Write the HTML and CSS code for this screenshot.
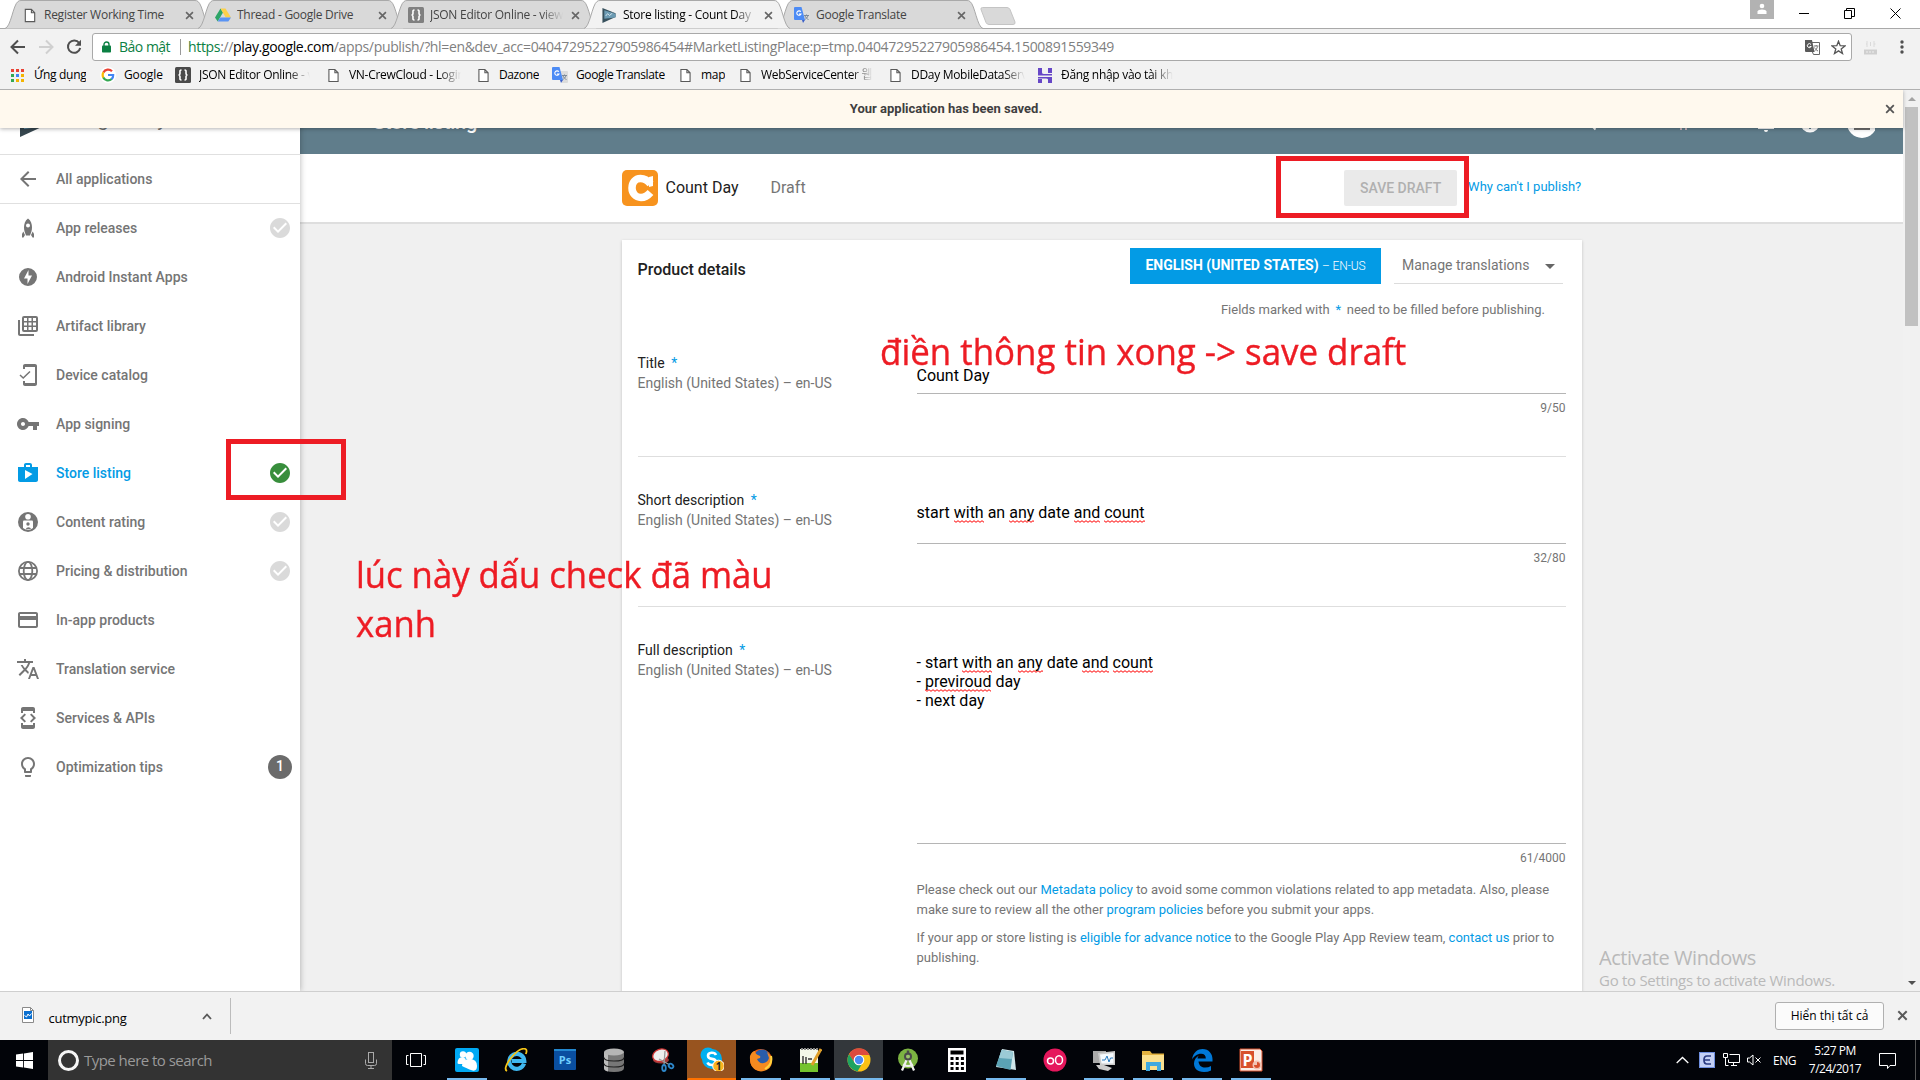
FILE: index.html
```html
<!DOCTYPE html>
<html lang="en">
<head>
<meta charset="utf-8">
<title>Store listing - Count Day</title>
<link rel="stylesheet" href="styles.css">
</head>
<body>
<svg class="defs" width="0" height="0">
  <symbol id="page" viewBox="0 0 12 16"><path d="M1 1.500h6.500L11 5v9.500H1z M7.500 1.500V5H11" fill="#fff" stroke="#5a5a5a" stroke-width="1.200"/></symbol>
  <symbol id="x" viewBox="0 0 10 10"><path d="M1.200 1.200l7.600 7.600M8.800 1.200L1.200 8.800" stroke="currentColor" stroke-width="1.800" fill="none"/></symbol>
  <symbol id="json" viewBox="0 0 16 16"><rect width="16" height="16" rx="1.500" fill="currentColor"/><path d="M6.500 3C4.500 3 5 4.500 5 6S4.500 8 3.500 8C4.500 8 5 8.500 5 10s-.5 3 1.500 3M9.500 3c2 0 1.500 1.500 1.500 3s.5 2 1.500 2c-1 0-1.500.5-1.500 2s.5 3-1.500 3" fill="none" stroke="#fff" stroke-width="1.600"/></symbol>
  <symbol id="gt" viewBox="0 0 16 16"><path d="M7 4h8a1 1 0 011 1v10a1 1 0 01-1 1H10z" fill="#dcdcdc"/><path d="M10 8.500h5M12.500 7.500v1M14 8.500c-.5 2-2 3.500-3.500 4M11 9c.7 1.500 2 3 3.500 3.500" stroke="#7d8a99" fill="none"/><path d="M1 0h6.500L11 13H1a1 1 0 01-1-1V1a1 1 0 011-1z" fill="#4c8bf5"/><path d="M8 13h3l-2 3z" fill="#3a5fc8"/><path d="M6.800 4.800A2.200 2.200 0 107 7H5" stroke="#fff" stroke-width="1.100" fill="none"/></symbol>
  <symbol id="play" viewBox="0 0 14 16"><path d="M0 0l14 5.500v4L0 16z" fill="#37505c"/><path d="M2 2.500l12 3.500v4L2 11.500z" fill="#6c9bb3"/><path d="M3.500 8.500l2-2.500 2 2 3-2.500" stroke="#d5e5ee" fill="none"/></symbol>
  <symbol id="check" viewBox="0 0 24 24"><path d="M12 2C6.480 2 2 6.480 2 12s4.480 10 10 10 10-4.480 10-10S17.520 2 12 2zm-2 15l-5-5 1.410-1.410L10 14.170l7.590-7.590L19 8l-9 9z" fill="currentColor"/></symbol>
</svg>

<header class="chrome">
  <div class="tabs">
    <div class="tab"><svg class="shape" viewBox="0 0 206 29"><path d="M0 28.500C6 27 8 5 13 1.500Q14 .5 16 .5H190Q192 .5 193 1.500C198 5 200 27 206 28.500"/></svg><svg class="fav pg"><use href="#page"/></svg><span class="ttl">Register Working Time</span><svg class="cl"><use href="#x"/></svg></div>
    <div class="tab"><svg class="shape" viewBox="0 0 206 29"><path d="M0 28.500C6 27 8 5 13 1.500Q14 .5 16 .5H190Q192 .5 193 1.500C198 5 200 27 206 28.500"/></svg><svg class="fav" viewBox="0 0 16 16"><path d="M5.500 1.500L0 10.500l2.700 4L8 5.500z" fill="#2da567"/><path d="M5.500 1.500h5l5.500 9h-5.300z" fill="#fcd04b"/><path d="M5.300 10.500H16l-2.700 4H2.700z" fill="#5a94f4"/></svg><span class="ttl">Thread - Google Drive</span><svg class="cl"><use href="#x"/></svg></div>
    <div class="tab"><svg class="shape" viewBox="0 0 206 29"><path d="M0 28.500C6 27 8 5 13 1.500Q14 .5 16 .5H190Q192 .5 193 1.500C198 5 200 27 206 28.500"/></svg><svg class="fav dim"><use href="#json"/></svg><span class="ttl fade">JSON Editor Online - view</span><svg class="cl"><use href="#x"/></svg></div>
    <div class="tab active"><svg class="shape" viewBox="0 0 206 29"><path d="M0 28.500C6 27 8 5 13 1.500Q14 .5 16 .5H190Q192 .5 193 1.500C198 5 200 27 206 28.500"/></svg><svg class="fav pl"><use href="#play"/></svg><span class="ttl fade">Store listing - Count Day</span><svg class="cl"><use href="#x"/></svg></div>
    <div class="tab"><svg class="shape" viewBox="0 0 206 29"><path d="M0 28.500C6 27 8 5 13 1.500Q14 .5 16 .5H190Q192 .5 193 1.500C198 5 200 27 206 28.500"/></svg><svg class="fav"><use href="#gt"/></svg><span class="ttl">Google Translate</span><svg class="cl"><use href="#x"/></svg></div>
    <svg class="newtab" viewBox="0 0 36 18"><path d="M2.500.5H27Q29 .5 30 2.500L35 15Q35.500 17.500 33 17.500H9Q7 17.500 6 15.500L1 2.500Q.5.500 2.500.5z" fill="#d9d9d9" stroke="#c4c4c4"/></svg>
    <div class="winctl">
      <span class="user"><svg width="10" height="12" viewBox="0 0 10 12"><circle cx="5" cy="3" r="2.300" fill="#fff"/><path d="M0.500 11V8.500Q1 6.500 5 6.500t4.500 2V11z" fill="#fff"/></svg></span>
      <svg class="wc min" width="10" height="11"><path d="M0 5.500h10" stroke="#000"/></svg>
      <svg class="wc res" width="11" height="11"><path d="M.5 2.500h7v8h-7zM2.500 2V.5h8v8H8" stroke="#000" fill="none"/></svg>
      <svg class="wc" width="11" height="11"><path d="M.5.500l10 10M10.500.5l-10 10" stroke="#000" fill="none"/></svg>
    </div>
  </div>
  <div class="bar">
    <svg class="nav" viewBox="0 0 16 16"><path d="M15 8H2M8 1.500L1.500 8 8 14.500" stroke="#4f4f4f"/></svg>
    <svg class="nav" viewBox="0 0 16 16"><path d="M1 8h13M8 1.500L14.500 8 8 14.500" stroke="#d0d0d0"/></svg>
    <svg class="nav" viewBox="0 0 16 16"><path d="M13.200 4A6.200 6.200 0 1014.200 9" stroke="#4f4f4f"/><path d="M15 .8v6H9z" fill="#4f4f4f" stroke="none"/></svg>
    <div class="url">
      <svg class="lock" viewBox="0 0 9 12"><path d="M2 6V3.500a2.500 2.500 0 015 0V6" fill="none" stroke="#0b8043" stroke-width="1.400"/><rect y="4.500" width="9" height="7" rx=".8" fill="#0b8043"/></svg>
      <span class="secure">Bảo mật</span>
      <span class="addr"><i class="g">https</i>://<b>play.google.com</b>/apps/publish/?hl=en&amp;dev_acc=04047295227905986454#MarketListingPlace:p=tmp.04047295227905986454.1500891559349</span>
      <svg class="tr" width="15" height="15" viewBox="0 0 15 15"><path d="M7 2.500h7.500v12H8.500L7 11" fill="#fff" stroke="#666"/><path d="M9 6h4.500M11.200 5v1M12.500 6.500c-.5 2-1.500 3.500-3 4.500M9.500 7.500c.8 1.500 1.800 2.600 3.500 3.500" stroke="#777" fill="none"/><path d="M0 0h7l2.500 12H1a1 1 0 01-1-1z" fill="#5a5a5a"/><path d="M6 4.500A2 2 0 106.200 6.500H4.500" stroke="#fff" fill="none"/></svg>
      <svg width="15" height="15" viewBox="0 0 15 15"><path d="M7.500 1.200l1.700 4.500 4.800.2-3.800 3 1.300 4.600-4-2.600-4 2.600 1.300-4.600-3.800-3 4.800-.2z" fill="none" stroke="#555" stroke-width="1.300"/></svg>
    </div>
    <svg class="ext" width="13" height="15" viewBox="0 0 13 15"><path d="M3 1v6M6.500 2v4M10 1v6M2 4h1M10 4h1.500" stroke="#dadada" fill="none"/><rect y="9.500" width="13" height="5" fill="#cfcfcf"/><path d="M2 12h9" stroke="#eee" stroke-dasharray="2 1"/></svg>
    <svg width="4" height="14" viewBox="0 0 4 14"><g fill="#505050"><circle cx="2" cy="2" r="1.700"/><circle cx="2" cy="7" r="1.700"/><circle cx="2" cy="12" r="1.700"/></g></svg>
  </div>
  <nav class="marks">
    <span class="bm w1"><svg width="13" height="13" viewBox="0 0 13 13"><g fill="#ea4335"><path d="M0 0h3v3H0zM5 0h3v3H5zM10 0h3v3h-3z"/></g><path d="M0 5h3v3H0zM0 10h3v3H0z" fill="#34a853"/><path d="M5 5h3v3H5z" fill="#4285f4"/><path d="M10 5h3v3h-3zM5 10h3v3H5zM10 10h3v3h-3z" fill="#f4b400"/></svg><em>Ứng dụng</em></span>
    <span class="bm w2"><svg width="16" height="16" viewBox="0 0 16 16"><circle cx="8" cy="8" r="8" fill="#fff"/><g fill="none" stroke-width="2.200"><path d="M12 4.300A5.300 5.300 0 003.400 5.500" stroke="#ea4335"/><path d="M3.400 5.300a5.400 5.400 0 000 5.400" stroke="#fbbc05"/><path d="M3.300 10.500A5.300 5.300 0 0011.700 12" stroke="#34a853"/><path d="M11.500 12.200A5.300 5.300 0 0013.200 8H8" stroke="#4285f4"/></g></svg><em>Google</em></span>
    <span class="bm w3"><svg class="dk" width="16" height="16"><use href="#json"/></svg><em class="fade">JSON Editor Online - view</em></span>
    <span class="bm w4"><svg width="11" height="15"><use href="#page"/></svg><em class="fade">VN-CrewCloud - Login</em></span>
    <span class="bm w5"><svg width="11" height="15"><use href="#page"/></svg><em>Dazone</em></span>
    <span class="bm w6"><svg width="16" height="16"><use href="#gt"/></svg><em>Google Translate</em></span>
    <span class="bm w7"><svg width="11" height="15"><use href="#page"/></svg><em>map</em></span>
    <span class="bm w8"><svg width="11" height="15"><use href="#page"/></svg><em class="fade">WebServiceCenter 웹</em></span>
    <span class="bm w9"><svg width="11" height="15"><use href="#page"/></svg><em class="fade">DDay MobileDataServ</em></span>
    <span class="bm w10"><svg width="14" height="15" viewBox="0 0 14 15"><path d="M0 0h4v4.500Q4 6 6 6h8v1.500H0zM10 0h4v5h-4zM0 9h14v6h-4v-3.500Q10 10.500 8 10.500H0zM0 11h4v4H0z" fill="#6747c7"/></svg><em class="fade">Đăng nhập vào tài kho</em></span>
  </nav>
</header>

<div class="view">
  <div class="banner"><span>Your application has been saved.</span><svg><use href="#x"/></svg></div>
  <aside class="side">
    <div class="brand"><svg width="26" height="40" viewBox="0 0 26 40"><path d="M0 0l26 20v7L0 39z" fill="#37474f"/><path d="M4 4l22 17v7L4 31z" fill="#5f8fa8"/></svg><span>Google Play Console</span></div>
    <div class="item back"><svg viewBox="0 0 24 24"><path d="M20 11H7.830l5.590-5.590L12 4l-8 8 8 8 1.410-1.410L7.830 13H20z"/></svg>All applications</div>
    <div class="item"><svg viewBox="0 0 24 24"><path fill-rule="evenodd" d="M12 2.500C9 4.500 8 8 8 11.500c0 3 1 5.500 2 8h4c1-2.500 2-5 2-8C16 8 15 4.500 12 2.500zm0 5a2 2 0 110 4 2 2 0 010-4zM7.300 15.500L6 18v3.500h1.500L9 19zM16.700 15.500L18 18v3.500h-1.500L15 19z"/></svg>App releases<svg class="st"><use href="#check"/></svg></div>
    <div class="item"><svg viewBox="0 0 24 24"><path fill-rule="evenodd" d="M12 3a9 9 0 100 18 9 9 0 000-18zm-.5 16v-5.500H8L12.500 5v5.500H16z"/></svg>Android Instant Apps</div>
    <div class="item"><svg viewBox="0 0 24 24"><path fill-rule="evenodd" d="M4 6H2v14c0 1.100.9 2 2 2h14v-2H4zM8 2h12a2 2 0 012 2v12a2 2 0 01-2 2H8a2 2 0 01-2-2V4a2 2 0 012-2zm0 2v3h3V4zm4.500 0v3h3V4zM17 4v3h3V4zM8 8.500v3h3v-3zm4.500 0v3h3v-3zm4.500 0v3h3v-3zM8 13v3h3v-3zm4.500 0v3h3v-3zm4.500 0v3h3v-3z"/></svg>Artifact library</div>
    <div class="item"><svg viewBox="0 0 24 24"><path d="M19 1H9c-1.100 0-2 .9-2 2v3h2V4h10v16H9v-2H7v3c0 1.100.9 2 2 2h10c1.100 0 2-.9 2-2V3c0-1.100-.9-2-2-2z"/><path d="M4 12l3.200 3L14 8.500" fill="none" stroke="#757575" stroke-width="1.500"/></svg>Device catalog</div>
    <div class="item"><svg viewBox="0 0 24 24"><path fill-rule="evenodd" d="M12.650 10C11.830 7.670 9.610 6 7 6c-3.310 0-6 2.690-6 6s2.690 6 6 6c2.610 0 4.830-1.670 5.650-4H17v4h4v-4h2v-4H12.650zM7 14c-1.100 0-2-.9-2-2s.9-2 2-2 2 .9 2 2-.9 2-2 2z"/></svg>App signing</div>
    <div class="item on"><svg viewBox="0 0 24 24"><path fill-rule="evenodd" d="M16 6V4c0-1.110-.89-2-2-2h-4c-1.110 0-2 .89-2 2v2H2v13c0 1.110.89 2 2 2h16c1.110 0 2-.89 2-2V6h-6zm-6-2h4v2h-4V4zM9 18V9l7.500 4L9 18z"/></svg>Store listing<svg class="st"><use href="#check"/></svg></div>
    <div class="item"><svg viewBox="0 0 24 24"><circle cx="12" cy="12" r="10"/><circle cx="12" cy="6.800" r="2.800" fill="#fff"/><path d="M8 10.500h8a1 1 0 011 1V18a8 8 0 01-10 0v-6.500a1 1 0 011-1z" fill="#fff"/><circle cx="12" cy="14" r="1.700"/><path d="M9.500 19.500q1-2.300 3-2.300T15 19"/></svg>Content rating<svg class="st"><use href="#check"/></svg></div>
    <div class="item"><svg viewBox="0 0 24 24"><g fill="none" stroke="#757575" stroke-width="1.800"><circle cx="12" cy="12" r="9.100"/><ellipse cx="12" cy="12" rx="4.300" ry="9.100"/><path d="M3.500 9h17M3.500 15h17"/></g></svg>Pricing &amp; distribution<svg class="st"><use href="#check"/></svg></div>
    <div class="item"><svg viewBox="0 0 24 24"><path fill-rule="evenodd" d="M20 4H4c-1.110 0-1.990.89-1.990 2L2 18c0 1.110.89 2 2 2h16c1.110 0 2-.89 2-2V6c0-1.110-.89-2-2-2zm0 14H4v-6h16v6zm0-10H4V6h16v2z"/></svg>In-app products</div>
    <div class="item"><svg viewBox="0 0 24 24"><path d="M12.870 15.070l-2.540-2.510.03-.03c1.740-1.940 2.980-4.170 3.710-6.530H17V4h-7V2H8v2H1v1.990h11.170C11.500 7.920 10.440 9.750 9 11.350 8.070 10.320 7.300 9.190 6.690 8h-2c.73 1.630 1.730 3.170 2.980 4.560l-5.090 5.020L4 19l5-5 3.110 3.110.76-2.040zM18.500 10h-2L12 22h2l1.120-3h4.750L21 22h2l-4.500-12zm-2.620 7l1.620-4.330L19.120 17h-3.240z"/></svg>Translation service</div>
    <div class="item"><svg viewBox="0 0 24 24"><path d="M7 5h10v2h2V3c0-1.100-.9-1.990-2-1.990L7 1c-1.100 0-2 .9-2 2v4h2V5zm8.410 11.590L20 12l-4.590-4.590L14 8.830 17.170 12 14 15.170l1.410 1.420zM10 15.170L6.830 12 10 8.830 8.590 7.410 4 12l4.590 4.590L10 15.170zM17 19H7v-2H5v4c0 1.100.9 2 2 2h10c1.100 0 2-.9 2-2v-4h-2v2z"/></svg>Services &amp; APIs</div>
    <div class="item"><svg viewBox="0 0 24 24"><path fill-rule="evenodd" d="M9 21c0 .55.45 1 1 1h4c.55 0 1-.45 1-1v-1H9v1zm3-19C8.140 2 5 5.140 5 9c0 2.380 1.190 4.470 3 5.740V17c0 .55.45 1 1 1h6c.55 0 1-.45 1-1v-2.260c1.810-1.270 3-3.360 3-5.740 0-3.860-3.140-7-7-7zm2.850 11.100l-.85.6V16h-4v-2.300l-.85-.6C7.800 12.160 7 10.630 7 9c0-2.760 2.240-5 5-5s5 2.240 5 5c0 1.630-.8 3.160-2.150 4.100z"/></svg>Optimization tips<span class="badge">1</span></div>
  </aside>
  <main class="main">
    <div class="ribbon"><span>Store listing</span>
      <svg class="rb" width="290" height="64" viewBox="0 0 290 64"><path d="M8 37l2.500 2.500" stroke="#fff" stroke-width="1.800"/><path d="M96 36v4M101 36v4" stroke="#e8c8d0" stroke-width="1.500"/><path d="M173 37h16v2h-16z" fill="#fff"/><path d="M179 40h4a2 2 0 01-4 0z" fill="#fff"/><circle cx="225" cy="33" r="9.500" fill="#fff"/><path d="M224 37h2v2h-2z" fill="#607d8b"/><circle cx="277" cy="33" r="15" fill="#fff"/><path d="M269 30h16v10h-16z" fill="#707070"/></svg>
    </div>
    <div class="appbar">
      <svg class="logo" width="36" height="36" viewBox="0 0 36 36"><rect width="36" height="36" rx="5" fill="#f7931e"/><path d="M28.500 14C25 9.500 22.500 8.500 18.500 8.500 13 8.500 10 13 10 18s3.500 9.500 9 9.500c4 0 6.500-1.500 9.500-5" fill="none" stroke="#fff" stroke-width="7.500"/><path d="M27 7l4-1v10l-4 1z" fill="#fff"/></svg>
      <span class="app">Count Day</span><span class="state">Draft</span>
      <button class="save">SAVE DRAFT</button><a class="why">Why can't I publish?</a>
    </div>
    <section class="card">
      <div class="top"><h2>Product details</h2><button class="lang">ENGLISH (UNITED STATES) <small>– EN-US</small></button><div class="manage">Manage translations<i></i></div></div>
      <p class="req">Fields marked with <s>*</s> need to be filled before publishing.</p>
      <div class="row r1"><label>Title <s>*</s><small>English (United States) – en-US</small></label><div class="field"><div class="val">Count Day</div><span class="cnt">9/50</span></div></div>
      <div class="row r2"><label>Short description <s>*</s><small>English (United States) – en-US</small></label><div class="field"><div class="val">start <u>with</u> an <u>any</u> date <u>and</u> <u>count</u></div><span class="cnt">32/80</span></div></div>
      <div class="row r3"><label>Full description <s>*</s><small>English (United States) – en-US</small></label><div class="field"><div class="val">- start <u>with</u> an <u>any</u> date <u>and</u> <u>count</u><br>- <u>previroud</u> day<br>- next day</div><span class="cnt">61/4000</span>
        <p>Please check out our <a>Metadata policy</a> to avoid some common violations related to app metadata. Also, please<br>make sure to review all the other <a>program policies</a> before you submit your apps.</p>
        <p>If your app or store listing is <a>eligible for advance notice</a> to the Google Play App Review team, <a>contact us</a> prior to<br>publishing.</p></div></div>
    </section>
  </main>
  <div class="scroll"><i class="up"></i><b></b><i class="dn"></i></div>
</div>

<div class="shelf">
  <svg width="12" height="16" viewBox="0 0 12 16"><path d="M.5.500h8l3 3v12H.5z" fill="#fff" stroke="#8a8a8a"/><path d="M8.500.5v3h3" fill="none" stroke="#8a8a8a"/><rect x="2" y="4" width="8" height="8" fill="#0a6fd0"/><path d="M2.500 8.500l2 1.500 1.500-3 1.500 2 2-2.500" stroke="#fff" fill="none"/></svg>
  <span class="file">cutmypic.png</span>
  <svg class="chev" width="10" height="7" viewBox="0 0 10 7"><path d="M1 6l4-4.500L9 6" stroke="#5a5a5a" stroke-width="1.800" fill="none"/></svg>
  <i class="sep"></i>
  <button>Hiển thị tất cả</button>
  <svg class="cl"><use href="#x"/></svg>
</div>

<footer class="task">
  <div class="start"><svg width="17" height="17" viewBox="0 0 16 16"><path d="M0 2.300L6.700 1.400V7.600H0zM7.500 1.300L16 0v7.600H7.500zM0 8.400h6.700v6.200L0 13.700zM7.500 8.400H16V16l-8.500-1.300z" fill="#fff"/></svg></div>
  <div class="search"><i class="ring"></i><span>Type here to search</span><svg width="12" height="17" viewBox="0 0 12 17"><rect x="3.500" y=".5" width="5" height="10" fill="none" stroke="#aaa"/><path d="M.5 7.500v4q0 2 2 2h7q2 0 2-2v-4M6 13.500v3M3 16.500h6" fill="none" stroke="#aaa"/></svg></div>
  <div class="tv"><svg width="20" height="14" viewBox="0 0 20 14"><path d="M4.500.5h11v13h-11zM2.500 2.500h-2v9h2M17.500 2.500h2v9h-2" fill="none" stroke="#fff"/></svg></div>
  <div class="apps">
    <span class="run"><svg viewBox="0 0 24 24"><rect width="24" height="24" rx="2" fill="#00a9f4"/><circle cx="8" cy="6.500" r="3.200" fill="#fff"/><path d="M2.500 15q0-6 5.500-6l3 2-3 5H4q-1.500 0-1.500-1z" fill="#fff"/><circle cx="14.500" cy="8" r="4.200" fill="#fff"/><path d="M7 18q0-7 7.500-7t7.500 7-7.500 3.500T7 18z" fill="#fff"/></svg></span>
    <span><svg viewBox="0 0 24 24"><path d="M20 15.500A7.500 7.500 0 1120.300 13H8" fill="none" stroke="#3fb8f0" stroke-width="4.200"/><path d="M3 23Q-1 21 6.500 10.500 16-1 21.500 1q2 1 .3 5" fill="none" stroke="#f5c518" stroke-width="1.800"/></svg></span>
    <span><svg viewBox="0 0 24 24"><rect x="1" y="1" width="22" height="21" rx="1" fill="#0a4fa0"/><path d="M1 2h22" stroke="#2c9be0" stroke-width="1.500"/><text x="12" y="15.500" class="ps">Ps</text></svg></span>
    <span><svg viewBox="0 0 24 24"><path d="M2 4v16q0 4 10 4t10-4V4z" fill="#777"/><path d="M2 4v16q0 2.500 4 3.500V6z" fill="#bbb"/><ellipse cx="12" cy="4" rx="10" ry="3.500" fill="#b5b5b5"/><path d="M2 9.500q0 3.500 10 3.500t10-3.500M2 15.500Q2 19 12 19t10-3.500" fill="none" stroke="#222" stroke-width="1.200"/></svg></span>
    <span><svg viewBox="0 0 24 24"><ellipse cx="10" cy="12" rx="8" ry="3.500" fill="#a03a3a"/><ellipse cx="9.500" cy="7" rx="8" ry="6" fill="#eee" stroke="#d03535" stroke-width="1.300" transform="rotate(-20 10 7)"/><path d="M14 3l-1 14M8 11l11 6" stroke="#999" stroke-width="1.300"/><g fill="none" stroke="#2d86c8" stroke-width="1.800"><ellipse cx="13" cy="20" rx="1.800" ry="3"/><ellipse cx="20" cy="18" rx="2.500" ry="2" transform="rotate(40 20 18)"/></g></svg></span>
    <span class="skype"><svg viewBox="0 0 24 24"><circle cx="8" cy="8" r="7.500" fill="#00aff0"/><circle cx="12" cy="12" r="10" fill="#00aff0"/><path d="M16 8Q15 5.500 11.500 5.700 8 6 8 8.700t4 3.200 4 3.400q-.5 2.700-4 2.700T7.500 15.500" fill="none" stroke="#fff" stroke-width="2.600"/><circle cx="18.500" cy="19" r="5.800" fill="#fbb320" stroke="#fff"/><text x="18.500" y="23" class="one">1</text></svg></span>
    <span class="run"><svg viewBox="0 0 24 24"><circle cx="12" cy="12" r="11" fill="#e8590c"/><circle cx="13" cy="9.500" r="8" fill="#2a5caa"/><path d="M1 8Q3 3 6 3q0 3 4 4.500 2 .5 1 2.500l-3 1q2 5 7 4 4-1 5-5-1-3-2-6 5 4 5 9 0 9.500-11 10.500Q0 22 1 8z" fill="#f58a1f"/><path d="M22 8q2 8-6 13" stroke="#ffd23e" fill="none" stroke-width="2"/></svg></span>
    <span class="run"><svg viewBox="0 0 24 24"><path d="M2 1h18v23H2z" fill="#f4f8e8"/><path d="M2 15h18v9H2z" fill="#74c32d"/><path d="M3 1h17" stroke="#888" stroke-width="2" stroke-dasharray="2 1"/><path d="M5 8v8M8 9v7M10 11h4" stroke="#333" stroke-width="1.400"/><path d="M23 1L14 17" stroke="#e0a02a" stroke-width="3"/></svg></span>
    <span class="run cur"><svg viewBox="0 0 24 24"><circle cx="12" cy="12" r="11.500" fill="#fbc116"/><path d="M2 6.300A11.500 11.500 0 0122.500 7H12L7 14z" fill="#dd4b3e"/><path d="M2 6.300A11.500 11.500 0 0010.500 23.400L16 14l-8.500.5z" fill="#1da362"/><circle cx="12" cy="12" r="5.300" fill="#fff"/><circle cx="12" cy="12" r="4.200" fill="#4c8bf5"/></svg></span>
    <span><svg viewBox="0 0 24 24"><circle cx="12" cy="10.500" r="10" fill="#7cb342"/><path d="M11 11L6 22.500M13 11l5 11.500M7 16.500q5 3 10 0" fill="none" stroke="#f0f0f0" stroke-width="2.200"/><circle cx="12" cy="8.500" r="3" fill="#9cc56c" stroke="#4a4a4a" stroke-width="2"/><path d="M12 2.500v4" stroke="#4a4a4a" stroke-width="2.400"/></svg></span>
    <span><svg viewBox="0 0 24 24"><rect x="3" width="18" height="24" fill="#fff"/><path d="M5.500 2.500h13v4h-13z" fill="#000"/><path d="M5.500 10.500h14M5.500 15.500h14M5.500 20.500h14" stroke="#000" stroke-width="3" stroke-dasharray="3 2.200"/></svg></span>
    <span class="run"><svg viewBox="0 0 24 24"><path d="M8 1l12 2 2 19-20-3z" fill="#cfe6ea"/><path d="M7.500 2L19 4l-2.500 18L2 18z" fill="#5ba3b5"/><path d="M7.500 2L19 4l-1.300 7L5 10z" fill="#9bcbd6"/></svg></span>
    <span><svg viewBox="0 0 24 24"><circle cx="12" cy="12" r="11.500" fill="#e5175c"/><g fill="none" stroke="#fff" stroke-width="1.500"><circle cx="7.500" cy="13" r="3"/><ellipse cx="16" cy="12" rx="3.500" ry="4.300"/></g></svg></span>
    <span class="run"><svg viewBox="0 0 24 24"><path d="M1 3h13v12H1z" fill="#aaa"/><path d="M6 5l17-2v14L8 17z" fill="#ccc"/><path d="M8 6.500L21.500 5v10.500L9.500 15.500z" fill="#f5fafe"/><path d="M10 12h3l2-4 2 6 1.500-4H21" fill="none" stroke="#2a7bbf"/><path d="M4 17l8 0 8 3-4 3-9-2z" fill="#ccc"/></svg></span>
    <span class="run"><svg viewBox="0 0 24 24"><path d="M1 3h8l2 2.500h12V22H1z" fill="#e3b341"/><path d="M1 7h22v15H1z" fill="#fbe08e"/><path d="M5 23v-9h15v9h-4v-5H9v5z" fill="#3fa9e0"/></svg></span>
    <span class="run"><svg viewBox="0 0 24 24"><path d="M2 11.500C3 4 8 1 12.500 1 19 1 22.500 6 22.500 11v2.500H8.500C9 18 12 19.500 15 19.500q3.500 0 6-1.500v4.500Q18 24 14 24C7 24 4 20 4 15.500c0-3.500 2-6.500 5-8-1 1-1.300 2-1.500 3h8.300q0-4.700-4.600-4.700C7 5.800 4 8.500 2 11.500z" fill="#0078d7"/></svg></span>
    <span class="run"><svg viewBox="0 0 24 24"><path d="M1 1h20l2 2v20H1z" fill="#fbeee8" stroke="#d8502c"/><path d="M2 3h13v17H2z" fill="#d8502c"/><text x="8.500" y="17.500" class="pp">P</text><circle cx="18" cy="17" r="4.500" fill="#f3c4b4"/><path d="M18 17v-3a3 3 0 11-3 3z" fill="#d8502c"/></svg></span>
  </div>
  <div class="tray">
    <svg width="13" height="8" viewBox="0 0 13 8"><path d="M.7 7l5.800-5.500L12.300 7" stroke="#fff" stroke-width="1.300" fill="none"/></svg>
    <svg class="t2" width="16" height="16" viewBox="0 0 16 16"><rect width="16" height="16" fill="#6f8fe0"/><rect x="1" y="1" width="14" height="14" fill="#c3d0f5"/><path d="M12 4H8q-3 0-3 4t3 4h4M5 8h6" stroke="#2a3a80" stroke-width="1.700" fill="none"/></svg>
    <svg class="t3" width="17" height="14" viewBox="0 0 17 14"><path d="M6.500 1.500h10v8h-11v-3M8 12.500h6M10.500 10v2M.5.500h4v4h-4zM2.500 4.500v8h3" stroke="#fff" fill="none"/></svg>
    <svg class="t4" width="14" height="12" viewBox="0 0 14 12"><path d="M.5 4h2L6 1v10L2.500 8h-2zM8.500 3.500l5 5M13.500 3.500l-5 5" stroke="#fff" fill="none"/></svg>
    <span class="eng">ENG</span>
    <span class="clock">5:27 PM<br>7/24/2017</span>
    <svg class="t5" width="17" height="16" viewBox="0 0 17 16"><path d="M.5.500h16v12H11l-2.500 3v-3h-8z" stroke="#fff" fill="none"/></svg>
    <i class="desk"></i>
  </div>
</footer>

<div class="mark"><b>Activate Windows</b><span>Go to Settings to activate Windows.</span></div>
<div class="box b1"></div>
<div class="box b2"></div>
<div class="note n1">điền thông tin xong -&gt; save draft</div>
<div class="note n2">lúc này dấu check đã màu<br>xanh</div>
</body>
</html>
```
FILE: styles.css
```css
*{box-sizing:border-box}
body{margin:0;width:1920px;height:1080px;overflow:hidden;position:relative;display:flex;flex-direction:column;background:#fff;font-family:"Open Sans","Noto Sans","Noto Sans CJK KR",sans-serif;font-size:12px;color:#000}
.defs{position:absolute}
svg{display:block;flex:none}
em,i,b,s,u{font-style:normal;text-decoration:none;font-weight:400}
button{border:0;padding:0;font-family:inherit;color:#000}
p,h2{margin:0}

/* browser frame */
.chrome{height:90px;background:#f2f2f2;border-bottom:1px solid #b0b0b0;flex:none}
.tabs{height:29px;background:#fff;border-bottom:1px solid #a9a9a9;display:flex;padding-left:5px;position:relative}
.tab{position:relative;width:193px;height:29px;display:flex;align-items:center;padding:1px 0 0 17px;flex:none;color:#444}
.shape{position:absolute;left:0;top:0;width:206px;height:29px}
.shape path{fill:#d9d9d9;stroke:#a9a9a9}
.active{z-index:1;color:#000}
.active .shape path{fill:#f2f2f2}
.fav{position:relative;width:16px;height:16px}
.fav.pg{width:12px;height:15px;margin:0 2px}
.fav.pl{width:14px;height:15px;margin:0 1px}
.fav.dim{color:#808080}
.ttl{position:relative;width:133px;margin-left:6px;white-space:nowrap;overflow:hidden;letter-spacing:-.26px;line-height:18px}
.tab .cl{position:relative;width:9px;height:9px;margin-left:7.500px;color:#666}
.fade{-webkit-mask-image:linear-gradient(90deg,#000 calc(100% - 22px),transparent);mask-image:linear-gradient(90deg,#000 calc(100% - 22px),transparent)}
.newtab{width:36px;height:18px;margin:7px 0 0 10px}
.winctl{margin-left:auto;display:flex;align-items:center;padding:0 19px 2px 0}
.user{width:24px;height:19px;background:#b2b2b2;display:flex;justify-content:center;padding-top:3px;align-self:flex-start;margin-right:25px}
.min{margin-right:35px}
.res{margin-right:35px}

.bar{height:36px;display:flex;align-items:center;padding:0 16px 0 10px}
.nav{width:16px;height:16px;margin-right:12px;fill:none;stroke-width:2}
.nav:nth-child(3){margin-right:10px}
.url{height:28px;width:1760px;border:1px solid #a9a9a9;border-radius:3px;background:#fff;display:flex;align-items:center;padding:0 5px 0 9px;font-size:14px;line-height:20px}
.lock{width:9px;height:12px}
.secure{color:#0b8043;margin-left:8px;letter-spacing:-.5px;width:62px;border-right:1px solid #999;line-height:16px}
.addr{color:#808080;margin-left:7px;letter-spacing:-.336px;white-space:nowrap}
.addr b{color:#000}
.addr .g{color:#0b8043}
.tr{margin-left:auto;margin-right:11px}
.ext{margin-left:12px;margin-right:auto}

.marks{display:flex;height:20px;padding-left:11px;align-items:center}
.bm{display:flex;align-items:center;height:20px;white-space:nowrap;flex:none}
.bm em{margin-left:10px;line-height:18px;letter-spacing:-.3px;overflow:hidden}
.bm .dk{color:#4a4a4a}
.w1{width:89px}.w2{width:75px}.w2 em{margin-left:8px;letter-spacing:-.1px}
.w3{width:153px}.w3 em{margin-left:8px;width:111px}
.w4{width:150px}.w4 em{width:112px}
.w5{width:74px}.w5 em{letter-spacing:-.38px}.w6{width:128px}.w6 em{margin-left:8px;letter-spacing:-.35px}
.w7{width:60px}.w8{width:150px}.w8 em{width:112px}
.w9{width:148px}.w9 em{width:114px}.w10 em{margin-left:9px;width:112px}

/* page */
.view{height:901px;flex:none;display:flex;position:relative;overflow:hidden;background:#f0f0f0;font-family:Roboto,sans-serif}
.banner{position:absolute;left:0;top:0;width:1903px;height:38px;background:#fff9ee;z-index:5;box-shadow:0 1px 4px rgba(0,0,0,.3);display:flex;align-items:center;justify-content:center;font-size:13px;font-weight:700;color:#3f3f3f;padding:0 11px 1px 0}
.banner svg{position:absolute;right:8px;top:14px;width:10px;height:10px;color:#555}
.side{width:300px;background:#fff;box-shadow:0 0 6px rgba(0,0,0,.3);z-index:2;flex:none}
.brand{height:65px;border-bottom:1px solid #e0e0e0;display:flex;padding:8px 0 0 20px;color:#757575;font-size:20px}
.brand span{margin:8px 0 0 15px;line-height:26px}
.item{height:49px;display:flex;align-items:center;padding:0 8px 1px 16px;color:#757575;font-size:14px;font-weight:500}
.item svg{width:24px;height:24px;margin-right:16px;fill:#757575}
.item .st{margin:0 0 0 auto;color:#dadada;fill:currentColor}
.back{border-bottom:1px solid #e0e0e0;padding-bottom:0}
.on{color:#039be5}
.on svg{fill:#039be5}
.on .st{color:#388e3c}
.badge{margin-left:auto;width:24px;height:24px;border-radius:50%;background:#6b6b6b;color:#fff;text-align:center;line-height:23px}

.main{width:1603px;flex:none}
.ribbon{height:64px;background:#607d8b;color:#fff;font-size:20px;font-weight:500;display:flex}
.ribbon span{margin:17px 0 0 73px;line-height:30px;letter-spacing:-.24px}
.rb{margin-left:auto;margin-right:28px}
.appbar{height:70px;background:#fff;border-bottom:2px solid #dedede;display:flex;align-items:center;padding:1px 22px 2px 322px;font-size:16px;color:#212121}
.app{margin-left:7.500px;width:105px}
.state{color:#757575}
.save{margin-left:538.500px;width:113px;height:36px;border-radius:2px;background:#eaeaea;color:#b0b0b0;font-size:14px;font-weight:500}
.why{margin:-2px 0 0 11px;font-size:13px;color:#039be5;white-space:nowrap}

.card{margin:16px 0 0 321.500px;width:960px;height:800px;background:#fff;box-shadow:0 1px 3px rgba(0,0,0,.2);padding:8px 16px 0}
.top{height:36px;display:flex;position:relative}
.top h2{font-size:16px;font-weight:500;line-height:20px;margin-top:12px;width:492px;color:#212121}
.lang{width:251px;height:36px;background:#039be5;color:#fff;font-size:14px;font-weight:700;white-space:nowrap;padding:0 0 2px 1px}
.lang small{font-size:12px;font-weight:300;letter-spacing:-.15px}
.manage{margin-left:13px;width:169px;height:36px;border-bottom:1px solid #dcdcdc;padding:0 8px 1px 8.500px;display:flex;justify-content:space-between;align-items:center;color:#757575;font-size:14px}
.manage i{border:5.500px solid transparent;border-top-color:#666;border-bottom:0;margin-top:2px}
.req{text-align:right;font-size:13px;color:#757575;line-height:20px;margin:16px 20.500px 0 0}
.card s{color:#039be5}
.req s{padding:0 2.500px}
.row{display:flex;border-bottom:1px solid #dedede}
.row label{width:279px;flex:none;font-size:14px;line-height:20px;color:#212121}
.row label s{margin-left:3px}
.row small{display:block;font-size:14px;color:#757575}
.field{width:649px;font-size:13px;color:#757575;display:flex;flex-direction:column}
.val{font-size:16px;line-height:19px;color:#000;border-bottom:1px solid #b5b5b5}
.cnt{font-size:12px;text-align:right;line-height:14px;margin-top:7px}
.field p{line-height:20px;white-space:nowrap}
.field a,.why{color:#039be5}
.r1{height:137px;padding-top:33px}
.r1 .val{margin-top:13px;height:28px}
.r2{height:150px;padding-top:34px}
.r2 .val{margin-top:12px;height:41px}
.r3{border:0;padding-top:34px}
.r3 .val{margin-top:12px;height:191px}
.r3 .cnt{margin-bottom:15px}
.field p+p{margin-top:8px}
.row label{margin-top:-1px}
.r1 label{margin-top:0}
.val u{background:url("data:image/svg+xml,%3Csvg xmlns='http://www.w3.org/2000/svg' width='4' height='3'%3E%3Cpath d='M0 .7L2 2.300 4 .7' fill='none' stroke='%23f00'/%3E%3C/svg%3E") 0 100%/4px 3px repeat-x;padding-bottom:1px}

.scroll{width:17px;background:#f1f1f1;display:flex;flex-direction:column;align-items:center;padding:7px 0 6px}
.scroll b{width:13px;height:219px;background:#c1c1c1;margin-top:6px}
.scroll i{border:4px solid transparent}
.scroll .up{border-top:0;border-bottom-color:#a3a3a3}
.scroll .dn{border-bottom:0;border-top-color:#505050;margin-top:auto}

/* downloads */
.shelf{height:49px;flex:none;background:#f2f2f2;border-top:1px solid #cfcfcf;display:flex;align-items:center;padding:0 12px 0 22px}
.shelf>svg:first-child{margin-top:-2px}
.file{font-size:13px;letter-spacing:-.27px;margin:4px 0 0 14.500px;width:153.500px}
.sep{width:1px;height:36px;background:#bcbcbc;margin-left:18px}
.shelf button{margin:-1px 0 0 auto;width:109px;height:28px;border:1px solid #b0b0b0;border-radius:3px;background:#fbfbfb;font-size:12px;padding-bottom:1px}
.shelf .cl{width:11px;height:11px;margin:-1px 0 0 13px;color:#5a5a5a}

/* taskbar */
.task{height:40px;flex:none;background:#020409;display:flex;color:#fff}
.start{width:48px;display:flex;align-items:center;padding-left:16px}
.search{width:344px;background:#333;display:flex;align-items:center;padding:0 15px 0 10px;font-size:15px;color:#9a9a9a}
.ring{width:21px;height:21px;border:3px solid #f5f5f5;border-radius:50%}
.search span{margin-left:5px;letter-spacing:-.53px}
.search svg{margin-left:auto}
.tv{width:50px;display:flex;align-items:center;padding-left:14px}
.apps{display:flex}
.apps span{width:49px;height:40px;display:flex;align-items:center;justify-content:center;padding-bottom:1px;border-left:1px solid transparent;position:relative}
.apps span svg{width:24px;height:24px}
.apps .run::after{content:"";position:absolute;left:4px;bottom:0;width:40px;height:2px;background:#76b9ed}
.apps .skype{background:#98541f;border-bottom:2px solid #ff7200;padding:0}
.apps .cur{background:#33373b}
.apps .cur::after{left:0;width:48px}
.ps{font:700 11px "Open Sans",sans-serif;fill:#6fd0ff;text-anchor:middle}
.pp{font:700 16px "Open Sans",sans-serif;fill:#fff;text-anchor:middle}
.one{font:700 10px "Open Sans",sans-serif;fill:#222;text-anchor:middle}
.tray{margin-left:auto;display:flex;align-items:center}
.t2{margin-left:10px}.t3{margin-left:8px}.t4{margin-left:7px}
.eng{margin-left:12px;letter-spacing:-.48px;width:24px}
.clock{margin-left:11px;width:54px;text-align:center;line-height:18px;letter-spacing:-.5px}
.t5{margin-left:17px;margin-top:1px}
.desk{width:1px;height:40px;background:#555;margin:0 4px 0 19px}

/* overlays */
.mark{position:absolute;left:1599px;top:944px;color:#b9b9b9;font-size:15px;line-height:16px;height:47px;overflow:hidden;white-space:nowrap;z-index:6}
.mark b{display:block;font-size:20px;line-height:28px;letter-spacing:-.45px}
.mark span{letter-spacing:-.28px}
.box{position:absolute;border:5px solid #ed1c24;z-index:7}
.b1{left:1276px;top:156px;width:193px;height:62px}
.b2{left:226px;top:439px;width:120px;height:61px}
.note{position:absolute;z-index:8;font-size:36px;line-height:49px;color:#ed1c24;white-space:nowrap;transform-origin:0 0;-webkit-text-stroke:.4px #ed1c24}
.n1{left:880px;top:327px;transform:scaleX(.969)}
.n2{left:356px;top:550px;transform:scaleX(.963)}
```
